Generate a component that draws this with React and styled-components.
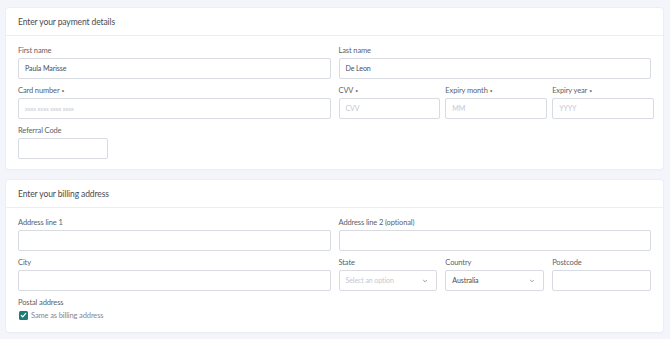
import React from "react";
import styled, { createGlobalStyle } from "styled-components";

const Global = createGlobalStyle`
  html, body { margin: 0; padding: 0; background: #f4f5fb; }
  body { font-family: Lato, "Open Sans", sans-serif; color: #4a4d55; }
  * { box-sizing: border-box; }
`;

const Page = styled.div`
  display: flex;
  flex-direction: column;
  gap: 11px;
  padding: 8px 7px 7px 6px;
`;

const Card = styled.section`
  background: #fff;
  border-radius: 3px;
  box-shadow: 0 0 0 1px #eceef5, 0 1px 2px rgba(30, 40, 80, 0.06);
`;

const CardHeader = styled.div`
  height: 28px;
  display: flex;
  align-items: center;
  padding: 0 12px;
  border-bottom: 1px solid #eceef3;
  font-size: 8.5px;
  letter-spacing: -0.1px;
  color: #474a52;
`;

const CardBody = styled.div`
  padding: 8px 12px 10px;
  display: flex;
  flex-direction: column;
  gap: 5px;
`;

const Row = styled.div`
  display: grid;
  grid-template-columns: 1fr 1fr;
  gap: 8px;
`;

const SubGrid = styled.div`
  display: grid;
  grid-template-columns: repeat(3, 1fr);
  gap: ${(p) => p.$gap}px;
  margin-right: ${(p) => p.$mr || 0}px;
`;

const Field = styled.div`
  display: flex;
  flex-direction: column;
  width: ${(p) => (p.$w ? p.$w + "px" : "auto")};
`;

const Label = styled.label`
  font-size: 7.5px;
  letter-spacing: -0.12px;
  line-height: 12px;
  height: 12px;
  margin-bottom: 2px;
  padding-top: 1px;
  color: #5c5f67;
  display: flex;
  align-items: center;
`;

const Input = styled.div`
  height: 21px;
  border: 1px solid #d8dbe2;
  border-radius: 2px;
  background: #fff;
  display: flex;
  align-items: center;
  padding: 0 6px;
  font-size: ${(p) => (p.$tiny ? "5.6px" : "7.1px")};
  letter-spacing: ${(p) => (p.$tiny ? "0" : "-0.12px")};
  color: ${(p) => (p.$ph ? "#c5c8cf" : "#4b4e55")};
`;

const SelectBox = styled(Input)`
  justify-content: space-between;
  padding-right: 8px;
`;

const Chevron = () => (
  <svg width="6" height="4" viewBox="0 0 6 4" fill="none">
    <path d="M1.2 1l1.8 1.8 1.8-1.8" stroke="#8a8d95" strokeWidth="0.9" />
  </svg>
);

const Req = styled.span`
  margin-left: 2px;
  font-size: 5px;
  color: #777a82;
`;

const CheckRow = styled.div`
  display: flex;
  align-items: center;
  gap: 3px;
  height: 14px;
  padding-left: 1px;
  font-size: 7.5px;
  letter-spacing: -0.12px;
  color: #85888f;
`;

const CheckBox = styled.span`
  width: 9px;
  height: 9px;
  border-radius: 1.5px;
  background: #1f7b78;
  display: flex;
  align-items: center;
  justify-content: center;
`;

const PostalLabel = styled(Label)`
  margin-bottom: 0;
`;

export default function App() {
  return (
    <>
      <Global />
      <Page>
        <Card>
          <CardHeader>Enter your payment details</CardHeader>
          <CardBody>
            <Row>
              <Field>
                <Label>First name</Label>
                <Input>Paula Marisse</Input>
              </Field>
              <Field>
                <Label>Last name</Label>
                <Input>De Leon</Input>
              </Field>
            </Row>
            <Row>
              <Field>
                <Label>Card number<Req>•</Req></Label>
                <Input $ph $tiny>xxxx xxxx xxxx xxxx</Input>
              </Field>
              <SubGrid $gap={5} $mr={-3}>
                <Field>
                  <Label>CVV<Req>•</Req></Label>
                  <Input $ph>CVV</Input>
                </Field>
                <Field>
                  <Label>Expiry month<Req>•</Req></Label>
                  <Input $ph>MM</Input>
                </Field>
                <Field>
                  <Label>Expiry year<Req>•</Req></Label>
                  <Input $ph>YYYY</Input>
                </Field>
              </SubGrid>
            </Row>
            <Field $w={90}>
              <Label>Referral Code</Label>
              <Input />
            </Field>
          </CardBody>
        </Card>
        <Card>
          <CardHeader>Enter your billing address</CardHeader>
          <CardBody>
            <Row>
              <Field>
                <Label>Address line 1</Label>
                <Input />
              </Field>
              <Field>
                <Label>Address line 2 (optional)</Label>
                <Input />
              </Field>
            </Row>
            <Row>
              <Field>
                <Label>City</Label>
                <Input />
              </Field>
              <SubGrid $gap={8}>
                <Field>
                  <Label>State</Label>
                  <SelectBox $ph>Select an option<Chevron /></SelectBox>
                </Field>
                <Field>
                  <Label>Country</Label>
                  <SelectBox>Australia<Chevron /></SelectBox>
                </Field>
                <Field>
                  <Label>Postcode</Label>
                  <Input />
                </Field>
              </SubGrid>
            </Row>
            <Field>
              <PostalLabel>Postal address</PostalLabel>
              <CheckRow>
                <CheckBox>
                  <svg width="7" height="6" viewBox="0 0 7 6" fill="none">
                    <path d="M1 3.2l1.7 1.6L6 1.2" stroke="#fff" strokeWidth="1.2" />
                  </svg>
                </CheckBox>
                Same as billing address
              </CheckRow>
            </Field>
          </CardBody>
        </Card>
      </Page>
    </>
  );
}
